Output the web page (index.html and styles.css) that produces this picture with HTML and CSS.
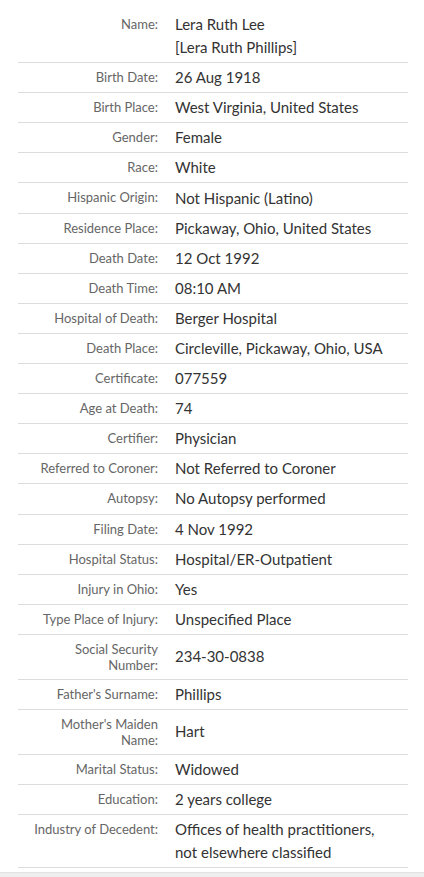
FILE: index.html
```html
<!DOCTYPE html>
<html lang="en">
<head>
<meta charset="utf-8">
<title>Record</title>
<link rel="stylesheet" href="styles.css">
</head>
<body>
<div class="record">
  <div class="row"><div class="label">Name:</div><div class="value">Lera Ruth Lee<br>[Lera Ruth Phillips]</div></div>
  <div class="row"><div class="label">Birth Date:</div><div class="value">26 Aug 1918</div></div>
  <div class="row"><div class="label">Birth Place:</div><div class="value">West Virginia, United States</div></div>
  <div class="row"><div class="label">Gender:</div><div class="value">Female</div></div>
  <div class="row"><div class="label">Race:</div><div class="value">White</div></div>
  <div class="row"><div class="label">Hispanic Origin:</div><div class="value">Not Hispanic (Latino)</div></div>
  <div class="row"><div class="label">Residence Place:</div><div class="value">Pickaway, Ohio, United States</div></div>
  <div class="row"><div class="label">Death Date:</div><div class="value">12 Oct 1992</div></div>
  <div class="row"><div class="label">Death Time:</div><div class="value">08:10 AM</div></div>
  <div class="row"><div class="label">Hospital of Death:</div><div class="value">Berger Hospital</div></div>
  <div class="row"><div class="label">Death Place:</div><div class="value">Circleville, Pickaway, Ohio, USA</div></div>
  <div class="row"><div class="label">Certificate:</div><div class="value">077559</div></div>
  <div class="row"><div class="label">Age at Death:</div><div class="value">74</div></div>
  <div class="row"><div class="label">Certifier:</div><div class="value">Physician</div></div>
  <div class="row"><div class="label">Referred to Coroner:</div><div class="value">Not Referred to Coroner</div></div>
  <div class="row"><div class="label">Autopsy:</div><div class="value">No Autopsy performed</div></div>
  <div class="row"><div class="label">Filing Date:</div><div class="value">4 Nov 1992</div></div>
  <div class="row"><div class="label">Hospital Status:</div><div class="value">Hospital/ER-Outpatient</div></div>
  <div class="row"><div class="label">Injury in Ohio:</div><div class="value">Yes</div></div>
  <div class="row"><div class="label">Type Place of Injury:</div><div class="value">Unspecified Place</div></div>
  <div class="row"><div class="label">Social Security Number:</div><div class="value">234-30-0838</div></div>
  <div class="row"><div class="label">Father's Surname:</div><div class="value">Phillips</div></div>
  <div class="row"><div class="label">Mother's Maiden Name:</div><div class="value">Hart</div></div>
  <div class="row"><div class="label">Marital Status:</div><div class="value">Widowed</div></div>
  <div class="row"><div class="label">Education:</div><div class="value">2 years college</div></div>
  <div class="row"><div class="label">Industry of Decedent:</div><div class="value">Offices of health practitioners, not elsewhere classified</div></div>
</div>
<div class="footer"></div>
</body>
</html>
```
FILE: styles.css
```css
html, body {
  margin: 0;
  padding: 0;
  background: #fff;
}
body {
  font-family: Lato, "Noto Sans", sans-serif;
  color: #333;
}
.record {
  margin: 0 16px 0 18px;
  padding-top: 10px;
}
.row {
  display: grid;
  grid-template-columns: 140px 1fr;
  column-gap: 17px;
  border-bottom: 1px solid #dcdcdc;
}
.label {
  align-self: start;
  text-align: right;
  font-size: 13px;
  line-height: 16px;
  padding: 6px 0 6px 12px;
  color: #666;
}
.value {
  align-self: center;
  font-size: 15px;
  line-height: 23px;
  padding: 3.05px 15px 3.05px 0;
  color: #333;
}
.footer {
  margin-top: 4px;
  height: 10px;
  background: #eeeeee;
  border-top: 1px solid #e2e2e2;
}
```
